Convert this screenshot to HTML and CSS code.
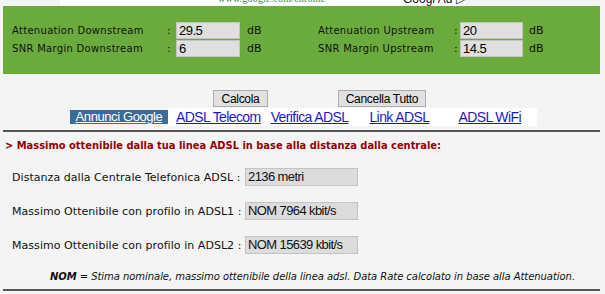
FILE: index.html
```html
<!DOCTYPE html>
<html lang="it">
<head>
    <meta charset="UTF-8">
    <title>Calcolo velocità ADSL</title>
    <link rel="stylesheet" href="styles.css">
</head>
<body>
    <div class="adstrip">
        <div class="adbox">
            <span class="adurl">www.google.com/chrome</span>
            <span class="adtag">Googl Ad &#9655;</span>
        </div>
    </div>

    <div class="panel">
        <div class="param-grid">
            <span class="lbl">Attenuation Downstream</span><span class="colon">:</span>
            <input class="val" type="text" value="29.5"><span class="unit">dB</span>
            <span class="lbl">Attenuation Upstream</span><span class="colon">:</span>
            <input class="val val-r" type="text" value="20"><span class="unit unit-r">dB</span>

            <span class="lbl">SNR Margin Downstream</span><span class="colon">:</span>
            <input class="val" type="text" value="6"><span class="unit">dB</span>
            <span class="lbl">SNR Margin Upstream</span><span class="colon">:</span>
            <input class="val val-r" type="text" value="14.5"><span class="unit unit-r">dB</span>
        </div>
    </div>

    <div class="buttons">
        <button class="btn-calc">Calcola</button>
        <button class="btn-clear">Cancella Tutto</button>
    </div>

    <div class="linkbar">
        <a href="#" class="ads">Annunci Google</a>
        <div class="links">
            <a href="#" class="l1">ADSL Telecom</a>
            <a href="#" class="l2">Verifica ADSL</a>
            <a href="#" class="l3">Link ADSL</a>
            <a href="#" class="l4">ADSL WiFi</a>
        </div>
    </div>

    <hr class="sep">

    <p class="title">&gt; Massimo ottenibile dalla tua linea ADSL in base alla distanza dalla centrale:</p>

    <div class="results">
        <span class="rlbl">Distanza dalla Centrale Telefonica ADSL :</span>
        <span class="rbox">2136 metri</span>
        <span class="rlbl">Massimo Ottenibile con profilo in ADSL1 :</span>
        <span class="rbox">NOM 7964 kbit/s</span>
        <span class="rlbl">Massimo Ottenibile con profilo in ADSL2 :</span>
        <span class="rbox">NOM 15639 kbit/s</span>
    </div>

    <p class="note"><b>NOM</b> = Stima nominale, massimo ottenibile della linea adsl. Data Rate calcolato in base alla Attenuation.</p>

    <hr class="sep sep-bottom">
</body>
</html>
```

FILE: styles.css
```css
body {
    margin: 0;
    background-color: #f4f4f4;
    font-family: "DejaVu Sans", Verdana, sans-serif;
    font-size: 11px;
    color: #111;
}
.adstrip {
    height: 6px;
    overflow: hidden;
    padding-left: 60px;
}
.adbox {
    width: 405px;
    height: 6px;
    background: #fff;
    display: flex;
    white-space: nowrap;
}
.adurl {
    width: 90px;
    margin: -7px 0 0 158px;
    font-family: "Liberation Serif", serif;
    font-size: 10px;
    letter-spacing: 0.2px;
    color: #3a8a3a;
}
.adtag {
    margin: -8px 0 0 95px;
    font-family: "Liberation Sans", Arial, sans-serif;
    font-size: 12px;
}
.panel {
    margin: 0 5px 0 3px;
    height: 52px;
    padding: 16px 0 0 9px;
    background-color: #6bab3d;
}
.param-grid {
    display: grid;
    grid-template-columns: 155px 9px 64px 78px 136px 6px 63px auto;
    grid-auto-rows: 17px;
    row-gap: 1px;
    align-items: center;
}
.lbl {
    font-size: 10px;
    letter-spacing: 0.3px;
    white-space: nowrap;
}
.colon {
    font-size: 11px;
}
.val {
    box-sizing: border-box;
    width: 64px;
    height: 17px;
    margin: 0;
    padding: 0 2px;
    border: 1px solid #c4c4c4;
    background: #dfdfdf;
    font-family: "Liberation Sans", Arial, sans-serif;
    font-size: 13px;
    letter-spacing: -0.5px;
    color: #000;
}
.val-r {
    width: 63px;
}
.unit {
    padding-left: 7px;
    font-size: 11px;
}
.unit-r {
    padding-left: 6px;
}
.buttons {
    display: flex;
    gap: 70px;
    padding: 16px 0 0 213px;
}
button {
    box-sizing: border-box;
    height: 17px;
    padding: 0;
    border: 1px solid #adadad;
    background: #e1e1e1;
    font-family: "Liberation Sans", Arial, sans-serif;
    font-size: 12px;
    letter-spacing: -0.3px;
    white-space: nowrap;
    color: #000;
}
.btn-calc {
    width: 55px;
}
.btn-clear {
    width: 88px;
}
.linkbar {
    display: flex;
    align-items: center;
    margin: 1px 0 0 70px;
    height: 18px;
    font-family: "Liberation Sans", Arial, sans-serif;
    font-size: 14px;
    letter-spacing: -0.6px;
    white-space: nowrap;
}
.linkbar a {
    color: #1a1acc;
}
.ads {
    width: 98px;
    height: 14px;
    line-height: 14px;
    text-align: center;
    font-size: 13px;
    letter-spacing: -0.4px;
    background: #3a6b99;
    color: #fff !important;
}
.links {
    display: flex;
    height: 18px;
    align-items: center;
    width: 369px;
    background: #fff;
}
.l1 { margin-left: 8px; }
.l2 { margin-left: 10px; }
.l3 { margin-left: 21px; }
.l4 { margin-left: 29px; }
.sep {
    margin: 4px 5px 0 3px;
    border: 0;
    border-top: 2px solid #555;
    height: 0;
}
.title {
    margin: 7px 0 0 5px;
    font-family: "DejaVu Sans Condensed", "DejaVu Sans", sans-serif;
    font-weight: bold;
    font-size: 11px;
    color: #950000;
}
.results {
    display: grid;
    grid-template-columns: 235px 113px;
    grid-auto-rows: 18px;
    row-gap: 16px;
    align-items: center;
    margin: 16px 0 0 10px;
}
.rlbl {
    padding-left: 2px;
    font-size: 11px;
    letter-spacing: 0.05px;
    white-space: nowrap;
}
.rbox {
    box-sizing: border-box;
    height: 18px;
    line-height: 16px;
    padding: 0 2px;
    border: 1px solid #c4c4c4;
    background: #dcdcdc;
    font-family: "Liberation Sans", Arial, sans-serif;
    font-size: 13px;
    letter-spacing: -0.6px;
}
.note {
    margin: 17px 0 0 0;
    padding-left: 20px;
    text-align: center;
    font-style: italic;
    font-size: 10px;
    letter-spacing: -0.05px;
}
.sep-bottom {
    margin-top: 7px;
}
```
